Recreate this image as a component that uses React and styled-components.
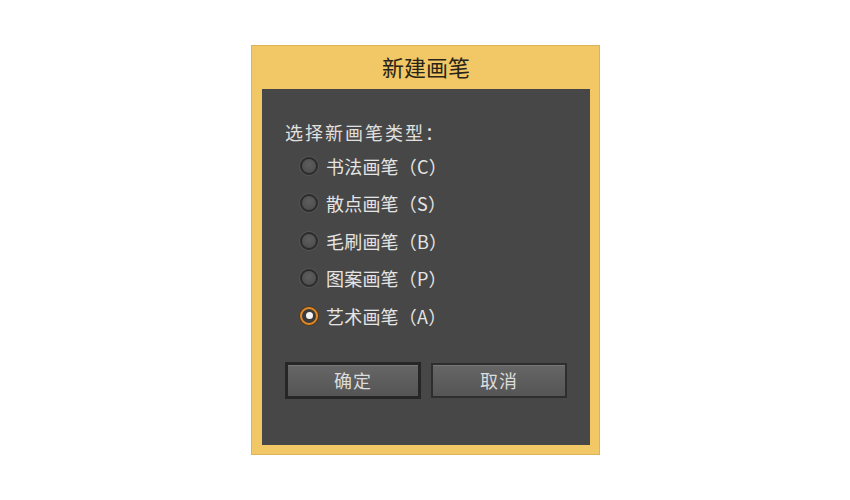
import styled, { createGlobalStyle } from "styled-components"

const Global = createGlobalStyle`
  html, body {
    margin: 0;
    padding: 0;
    background: #ffffff;
  }
  body {
    width: 850px;
    height: 500px;
    font-family: "Noto Sans CJK SC", "DejaVu Sans", sans-serif;
  }
`

const Page = styled.div`
  width: 850px;
  height: 500px;
  display: flex;
  justify-content: center;
  padding-top: 45px;
  box-sizing: border-box;
`

const Frame = styled.div`
  width: 349px;
  height: 410px;
  margin-left: 1px;
  box-sizing: border-box;
  background: #f1c865;
  border: 1px solid #dcb25a;
  padding: 0 9px 9px 10px;
  display: flex;
  flex-direction: column;
`

const Title = styled.div`
  height: 43px;
  display: flex;
  align-items: center;
  justify-content: center;
  font-size: 22px;
  color: #2a2418;
  padding-bottom: 3px;
  box-sizing: border-box;
`

const Panel = styled.div`
  flex: 1;
  background: #474747;
  padding: 28px 0 0 23px;
  display: flex;
  flex-direction: column;
`

const Label = styled.div`
  font-size: 18px;
  color: #e0e0e0;
  letter-spacing: 2px;
  height: 30px;
  line-height: 30px;
`

const List = styled.div`
  display: flex;
  flex-direction: column;
  padding-left: 15px;
`

const Option = styled.div`
  height: 37.5px;
  display: flex;
  align-items: center;
  gap: 8px;
  font-size: 18px;
  color: #e4e4e4;
  letter-spacing: 0.2px;
`

const Radio = styled.span`
  width: 18px;
  height: 18px;
  border-radius: 50%;
  box-sizing: border-box;
  border: 2px solid ${(p) => (p.$on ? "#e08a2a" : "#2c2c2c")};
  background: ${(p) => (p.$on ? "#3c3c3c" : "radial-gradient(circle at 50% 40%, #5e5e5e, #4a4a4a)")};
  box-shadow: ${(p) => (p.$on ? "0 0 0 1px #5a3a18" : "0 0 0 1px #555")};
  display: flex;
  align-items: center;
  justify-content: center;

  &::after {
    content: "";
    width: 7px;
    height: 7px;
    border-radius: 50%;
    background: #f4f4f4;
    display: ${(p) => (p.$on ? "block" : "none")};
  }
`

const Buttons = styled.div`
  display: flex;
  gap: 10px;
  margin-top: 27px;
`

const Button = styled.div`
  width: 136px;
  box-sizing: border-box;
  border: ${(p) => (p.$primary ? "3px solid #262626" : "2px solid #2e2e2e")};
  background: linear-gradient(#666666, #555555);
  box-shadow: inset 0 1px 0 #777;
  color: #dcdcdc;
  font-size: 18px;
  display: flex;
  align-items: center;
  justify-content: center;
  letter-spacing: 1px;
  margin-top: ${(p) => (p.$primary ? "0" : "1px")};
  height: ${(p) => (p.$primary ? "37px" : "35px")};
`

const options = [
  { text: "书法画笔（C）" },
  { text: "散点画笔（S）" },
  { text: "毛刷画笔（B）" },
  { text: "图案画笔（P）" },
  { text: "艺术画笔（A）", on: true },
]

const App = () => {
  return (
    <Page>
      <Global />
      <Frame>
        <Title>新建画笔</Title>
        <Panel>
          <Label>选择新画笔类型：</Label>
          <List>
            {options.map((o) => (
              <Option key={o.text}>
                <Radio $on={o.on} />
                <span>{o.text}</span>
              </Option>
            ))}
          </List>
          <Buttons>
            <Button $primary>确定</Button>
            <Button>取消</Button>
          </Buttons>
        </Panel>
      </Frame>
    </Page>
  )
}

export default App
